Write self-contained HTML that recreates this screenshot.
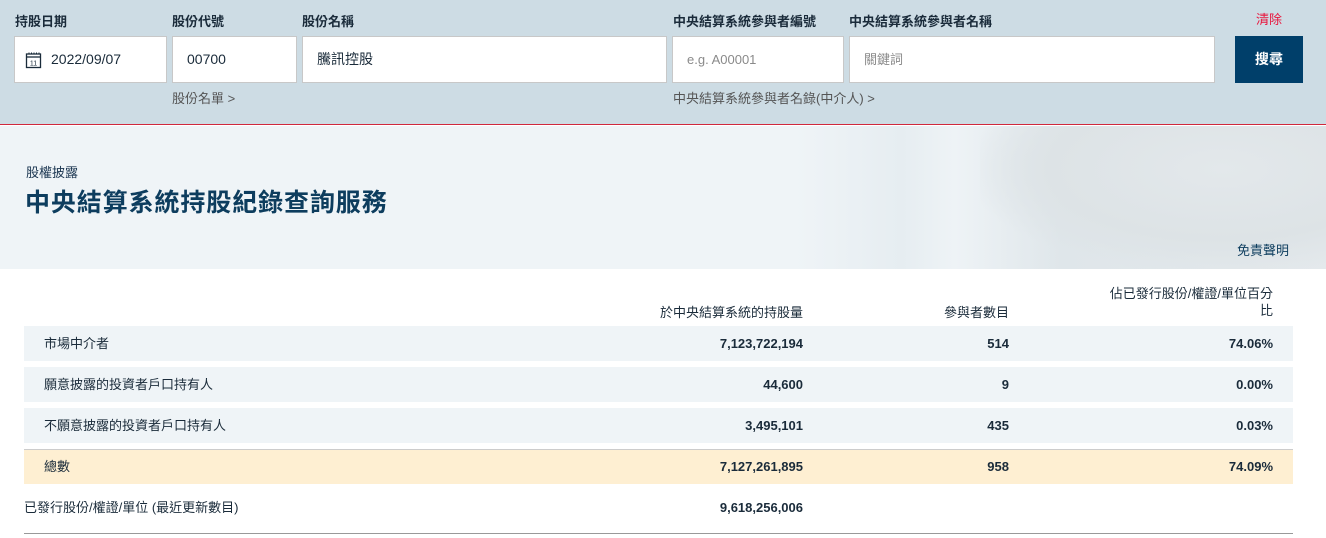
<!DOCTYPE html>
<html><head><meta charset="utf-8">
<style>
*{box-sizing:border-box;margin:0;padding:0}
body{width:1326px;height:538px;overflow:hidden;background:#fff;font-family:"Liberation Sans","Noto Sans CJK TC",sans-serif;color:#222;position:relative}
.top{position:absolute;left:0;top:0;width:1326px;height:125px;background:#cddce4;border-bottom:1px solid #d0283c}
.lbl{position:absolute;top:11px;font-size:13px;font-weight:bold;color:#1a2b3a}
.inp{position:absolute;top:36px;height:47px;background:#fff;border:1px solid #c8c8c8;font-size:14px;line-height:45px;color:#1a2b3a;padding-left:14px}
.ph{color:#8a8a8a;font-size:13px}
.lnk{position:absolute;top:88px;font-size:13px;color:#555}
.hero{position:absolute;left:0;top:126px;width:1326px;height:143px;background:linear-gradient(90deg,#eff4f7 0%,#eff4f7 60%,#e6edf1 68%,#eef3f6 72%,#dfe6ea 80%,#e4e9ec 100%)}
.blob{position:absolute;left:980px;top:126px;width:346px;height:143px;background:radial-gradient(ellipse at 70% 30%,#e3e8eb 0%,#dde3e6 50%,rgba(230,236,240,0) 75%)}
.row{position:absolute;left:24px;width:1269px;height:35px;background:#eff4f7;font-size:13px;color:#1a2b3a}
.row span{position:absolute;top:0;height:35px;line-height:35px}
.c1{left:20px}
.n{text-align:right;font-weight:bold}
</style></head><body>
<div class="top">
 <div class="lbl" style="left:15px">持股日期</div>
 <div class="lbl" style="left:172px">股份代號</div>
 <div class="lbl" style="left:302px">股份名稱</div>
 <div class="lbl" style="left:673px">中央結算系統參與者編號</div>
 <div class="lbl" style="left:849px">中央結算系統參與者名稱</div>
 <div style="position:absolute;left:1256px;top:9px;font-size:13px;color:#e8173e">清除</div>
 <div class="inp" style="left:14px;width:153px;padding-left:36px">2022/09/07
  <svg style="position:absolute;left:10px;top:14px" width="18" height="18" viewBox="0 0 18 18"><rect x="1.5" y="3" width="14" height="13.5" fill="none" stroke="#1a2b3a" stroke-width="1.3"/><line x1="1.5" y1="6" x2="15.5" y2="6" stroke="#1a2b3a" stroke-width="1.3"/><path d="M4 1.5v2M6.5 1.5v2M9 1.5v2M11.5 1.5v2M14 1.5v2" stroke="#1a2b3a" stroke-width="1"/><text x="8.5" y="14.5" font-size="7" text-anchor="middle" fill="#1a2b3a" font-family="Liberation Sans">11</text></svg>
 </div>
 <div class="inp" style="left:172px;width:125px">00700</div>
 <div class="inp" style="left:302px;width:365px">騰訊控股</div>
 <div class="inp ph" style="left:672px;width:172px">e.g. A00001</div>
 <div class="inp ph" style="left:849px;width:366px">關鍵詞</div>
 <div style="position:absolute;left:1235px;top:36px;width:68px;height:47px;background:#003f6a;color:#fff;font-size:14px;font-weight:bold;text-align:center;line-height:47px">搜尋</div>
 <div class="lnk" style="left:172px">股份名單 &gt;</div>
 <div class="lnk" style="left:673px">中央結算系統參與者名錄(中介人) &gt;</div>
</div>
<div class="hero"></div>
<div class="blob"></div>
<div style="position:absolute;left:26px;top:162px;font-size:13px;color:#1a3550">股權披露</div>
<div style="position:absolute;left:25px;top:183px;font-size:25px;font-weight:bold;color:#0d3d5e;letter-spacing:0.9px">中央結算系統持股紀錄查詢服務</div>
<div style="position:absolute;left:1237px;top:240px;font-size:13px;color:#0d3d5e">免責聲明</div>

<div style="position:absolute;left:500px;width:303px;top:302px;font-size:13px;text-align:right;color:#1a2b3a">於中央結算系統的持股量</div>
<div style="position:absolute;left:810px;width:199px;top:302px;font-size:13px;text-align:right;color:#1a2b3a">參與者數目</div>
<div style="position:absolute;left:1080px;width:193px;top:285px;font-size:13px;text-align:right;color:#1a2b3a;line-height:17px">佔已發行股份/權證/單位百分<br>比</div>

<div class="row" style="top:326px"><span class="c1">市場中介者</span><span class="n" style="right:490px">7,123,722,194</span><span class="n" style="right:284px">514</span><span class="n" style="right:20px">74.06%</span></div>
<div class="row" style="top:367px"><span class="c1">願意披露的投資者戶口持有人</span><span class="n" style="right:490px">44,600</span><span class="n" style="right:284px">9</span><span class="n" style="right:20px">0.00%</span></div>
<div class="row" style="top:408px"><span class="c1">不願意披露的投資者戶口持有人</span><span class="n" style="right:490px">3,495,101</span><span class="n" style="right:284px">435</span><span class="n" style="right:20px">0.03%</span></div>
<div class="row" style="top:449px;background:#feefd2;border-top:1px solid #ccc"><span class="c1" style="top:-1px">總數</span><span class="n" style="right:490px;top:-1px">7,127,261,895</span><span class="n" style="right:284px;top:-1px">958</span><span class="n" style="right:20px;top:-1px">74.09%</span></div>
<div class="row" style="top:490px;background:#fff"><span style="left:0">已發行股份/權證/單位 (最近更新數目)</span><span class="n" style="right:490px">9,618,256,006</span></div>
<div style="position:absolute;left:24px;top:533px;width:1269px;height:1px;background:#999"></div>
</body></html>
